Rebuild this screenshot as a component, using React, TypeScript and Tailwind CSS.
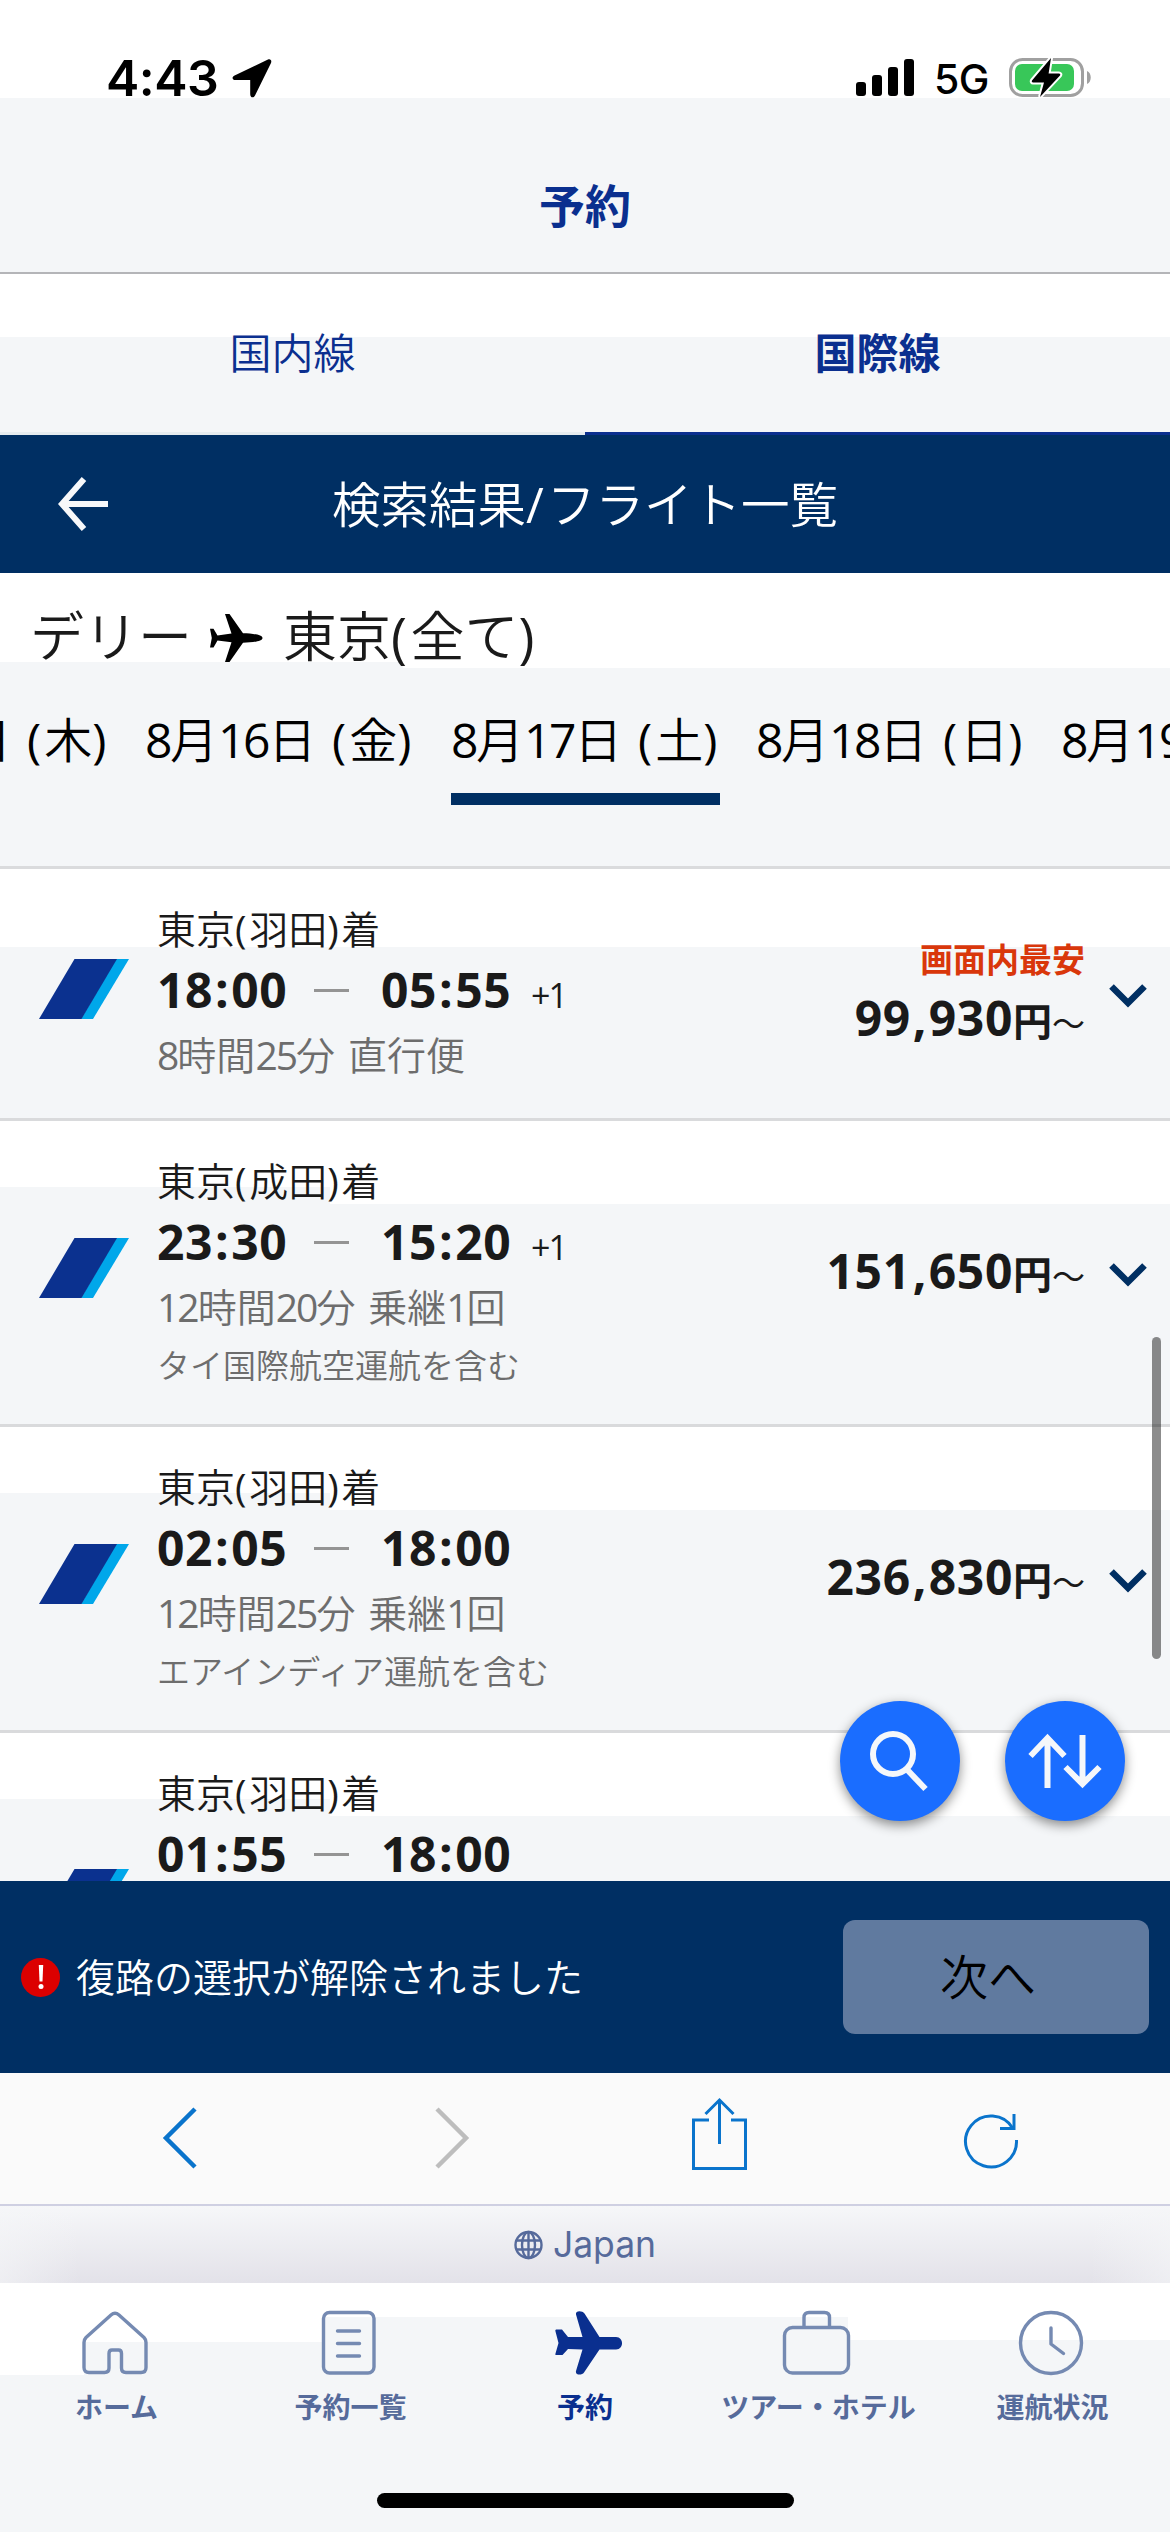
import type { ReactNode } from 'react'

interface Flight {
  arrival: string
  depart: string
  arrive: string
  nextDay?: boolean
  detail?: string
  operator?: string
  price?: string
  cheapest?: boolean
  rowClass: string
}

const flights: Flight[] = [
  {
    arrival: '東京(羽田)着',
    depart: '18:00',
    arrive: '05:55',
    nextDay: true,
    detail: '8時間25分 直行便',
    price: '99,930',
    cheapest: true,
    rowClass:
      'h-[252px] bg-[linear-gradient(#fff_78px,#f4f6f8_78px)]',
  },
  {
    arrival: '東京(成田)着',
    depart: '23:30',
    arrive: '15:20',
    nextDay: true,
    detail: '12時間20分 乗継1回',
    operator: 'タイ国際航空運航を含む',
    price: '151,650',
    rowClass:
      'h-[306px] bg-[linear-gradient(#fff_66px,#f4f6f8_66px),linear-gradient(#fff_83px,#f4f6f8_83px)] bg-[size:330px_100%,100%_100%] bg-no-repeat',
  },
  {
    arrival: '東京(羽田)着',
    depart: '02:05',
    arrive: '18:00',
    detail: '12時間25分 乗継1回',
    operator: 'エアインディア運航を含む',
    price: '236,830',
    rowClass:
      'h-[306px] bg-[linear-gradient(#fff_66px,#f4f6f8_66px),linear-gradient(#fff_83px,#f4f6f8_83px)] bg-[size:330px_100%,100%_100%] bg-no-repeat',
  },
  {
    arrival: '東京(羽田)着',
    depart: '01:55',
    arrive: '18:00',
    rowClass:
      'h-[344px] bg-[linear-gradient(#fff_66px,#f4f6f8_66px),linear-gradient(#fff_83px,#f4f6f8_83px)] bg-[size:330px_100%,100%_100%] bg-no-repeat',
  },
]

const dates = ['8月15日 (木)', '8月16日 (金)', '8月17日 (土)', '8月18日 (日)', '8月19日 (月)']

// Narrow digits and slightly wider punctuation than the base font
function Mixed({ text, bold }: { text: string; bold?: boolean }) {
  const parts = text.split(/([0-9]+|[ ():,/]+)/).filter(Boolean)
  return (
    <>
      {parts.map((part, i) => {
        if (/^[0-9]/.test(part)) {
          return (
            <span key={i} className={bold ? 'tracking-[0.013em]' : 'font-medium tracking-[-0.05em]'}>
              {part}
            </span>
          )
        }
        if (/^[ ():,/]/.test(part)) {
          return (
            <span key={i} className={bold ? 'pl-[0.04em] tracking-[0.05em]' : 'font-medium tracking-[0.068em]'}>
              {part}
            </span>
          )
        }
        return <span key={i}>{part}</span>
      })}
    </>
  )
}

function StatusBar() {
  return (
    <div className="flex h-[122px] items-start justify-between bg-[linear-gradient(#fff_98px,#f4f6f8_98px)] pl-[106px] pr-[78px] font-['Inter'] text-black">
      <div className="flex pt-[48px]">
        <span className="text-[50px] font-semibold leading-[60px] tracking-[-0.5px]">4:43</span>
        <svg className="ml-[14px] mt-[11px] h-[39px] w-[40px]" viewBox="0 0 40 39">
          <path d="M36 0.6 L2.6 16.4 C-0.6 18 0.2 21 3.4 21 H18.2 V35 C18.2 39 21.6 39.4 23 36.4 L39 4 C40 1.6 38.4 -0.4 36 0.6Z" />
        </svg>
      </div>
      <div className="flex items-start">
        <svg className="mt-[59px] h-[38px] w-[59px]" viewBox="0 0 59 38">
          <rect x="0" y="23" width="10" height="14" rx="3" />
          <rect x="16" y="16" width="10" height="21" rx="3" />
          <rect x="32" y="8" width="10" height="29" rx="3" />
          <rect x="48" y="0" width="10" height="37" rx="3" />
        </svg>
        <span className="ml-[19px] mt-[54px] text-[41px] font-medium leading-[50px] tracking-[-0.5px]">5G</span>
        <svg className="ml-[20px] mt-[56px] h-[43px] w-[83px]" viewBox="0 0 83 43">
          <rect x="1.5" y="3.5" width="72" height="36" rx="12" fill="#fff" stroke="#a0a0a0" strokeWidth="3" />
          <rect x="6" y="8" width="59" height="27" rx="7" fill="#38c759" />
          <path d="M78 15 C83 17 83 26 78 28Z" fill="#a0a0a0" />
          <path
            d="M42 2 L23 24.5 C22.4 25.6 23 26.4 24 26.4 H35 L31 41 L51 19.4 C51.8 18.4 51 17.4 50 17.4 H39.6Z"
            stroke="#fff"
            strokeWidth="4"
            paintOrder="stroke"
          />
        </svg>
      </div>
    </div>
  )
}

function TabHeader() {
  return (
    <div className="grid h-[161px] grid-cols-2 bg-[linear-gradient(#fff_63px,#f4f6f8_63px)] text-[42px] leading-[158px] text-[#0b2f8f]">
      <div className="border-b-[3px] border-[#e6ecef] text-center">国内線</div>
      <div className="border-b-[3px] border-[#0b2f8f] text-center font-bold">国際線</div>
    </div>
  )
}

function PlaneGlyph() {
  return (
    <svg className="h-[48px] w-[53px]" viewBox="0 0 53 48">
      <path d="M15 0 H19.5 L33 19.3 C42 19.5 52.500 20.500 52.500 24 C52.500 27.500 42 28.500 33 28.800 L19.500 48 H15 L21.500 28.300 L7.500 26.500 L3.500 33.500 H0 L1.800 24 L0 14.800 H3.500 L7.500 21.500 L21.500 19.500Z" />
    </svg>
  )
}

function AirlineLogo() {
  return (
    <svg className="h-[60px] w-[90px]" viewBox="0 0 90 60">
      <path d="M77 0H90L54 60H42Z" fill="#00a7ea" />
      <path d="M35.5 0H78L42.5 60H0Z" fill="#0b318f" />
    </svg>
  )
}

function FlightRow({ flight }: { flight: Flight }) {
  return (
    <div className={`flex shrink-0 border-b-[3px] border-[#d9dadc] ${flight.rowClass}`}>
      <div className="flex w-[157px] items-center pb-[9px] pl-[39px]">
        <AirlineLogo />
      </div>

      <div className="flex-1 pt-[36px] text-[39px] text-[#6d6d6d]">
        <p className="h-[48px] leading-[48px] text-[#1a1a1a]">
          <Mixed text={flight.arrival} />
        </p>
        <div className="flex h-[74px] items-center text-[48px] font-bold leading-[74px] text-[#1a1a1a]">
          <span className="w-[157px]">
            <Mixed text={flight.depart} bold />
          </span>
          <span className="h-[3px] w-[35px] bg-[#949494]" />
          <span className="ml-[32px] w-[150px]">
            <Mixed text={flight.arrive} bold />
          </span>
          {flight.nextDay && <span className="pt-[9px] text-[34px] font-medium tracking-[-0.06em]">+1</span>}
        </div>
        {flight.detail && (
          <p className="h-[56px] leading-[56px]">
            <Mixed text={flight.detail} />
          </p>
        )}
        {flight.operator && <p className="h-[62px] text-[33px] leading-[62px]">{flight.operator}</p>}
      </div>

      <div className="flex flex-col justify-center pr-[24px] text-right text-[#1a1a1a]">
        {flight.cheapest && (
          <p className="-mt-[4px] text-[33px] font-bold leading-[55px] text-[#d9370b]">画面内最安</p>
        )}
        {flight.price && (
          <p className="pt-[3px] text-[48px] font-bold leading-[56px]">
            <Mixed text={flight.price} bold />
            <span className="text-[39px] font-bold">円</span>
            <span className="text-[33px] font-normal">〜</span>
          </p>
        )}
      </div>

      <div className="flex w-[61px] items-center pt-[5px]">
        <svg className="h-[24px] w-[38px]" viewBox="0 0 38 24" fill="none" stroke="#002f63" strokeWidth="6.5">
          <path d="M2.5 2.5 L19 19 L35.5 2.5" />
        </svg>
      </div>
    </div>
  )
}

function Fab({ children }: { children: ReactNode }) {
  return (
    <div className="flex h-[120px] w-[120px] items-center justify-center rounded-full bg-[#1a6dff] shadow-[0_4px_12px_rgba(0,0,0,0.45)]">
      {children}
    </div>
  )
}

function BrowserBar() {
  return (
    <div className="flex h-[133px] items-start border-b-2 border-[#cfd0e2] bg-[#fafafa]">
      <svg className="ml-[162px] mt-[34px] h-[62px] w-[36px]" viewBox="0 0 36 62" fill="none" stroke="#0a74cc" strokeWidth="4.5">
        <path d="M33 2 L4 31 L33 60" />
      </svg>
      <svg className="ml-[236px] mt-[34px] h-[62px] w-[36px]" viewBox="0 0 36 62" fill="none" stroke="#bdbdbd" strokeWidth="4.5">
        <path d="M3 2 L32 31 L3 60" />
      </svg>
      <svg className="ml-[222px] mt-[24px] h-[74px] w-[55px]" viewBox="0 0 55 74" fill="none" stroke="#0a74cc" strokeWidth="3">
        <path d="M17 23 H1.5 V71.5 H53.5 V23 H39" />
        <path d="M27.5 47 V3 M13.5 17 L27.5 3 L41.5 17" />
      </svg>
      <svg className="ml-[216px] mt-[40px] h-[58px] w-[58px]" viewBox="0 0 58 58" fill="none" stroke="#0a74cc" strokeWidth="3">
        <path d="M53.5 27 A25.5 25.5 0 1 1 50 15.5" />
        <path d="M51 1 V15.5 H37" />
      </svg>
    </div>
  )
}

const tabs: { label: string; icon: ReactNode; active?: boolean }[] = [
  {
    label: 'ホーム',
    icon: (
      <path d="M27 4.600 Q31 1 35 4.600 L60 27 Q62 29 62 32 V57 Q62 62 57 62 H42 Q37.500 62 37.500 57.500 V43 Q37.500 39.500 34.500 39.500 H28 Q25 39.500 25 43 V57.500 Q25 62 20.500 62 H5 Q0 62 0 57 V32 Q0 29 2 27Z" />
    ),
  },
  {
    label: '予約一覧',
    icon: (
      <>
        <rect x="5.500" y="2" width="50.500" height="60.500" rx="6" />
        <path d="M19.500 20.500H41.500M19.500 33H41.500M19.500 45.500H41.500" strokeLinecap="round" />
      </>
    ),
  },
  {
    label: '予約',
    active: true,
    icon: (
      <path
        transform="translate(3 0)"
        stroke="none"
        fill="#0a2f8f"
        d="M21 4 C20 0 27 -0.500 29.500 3 L44.500 26.500 H61 C69 26.500 69 39 61 39 H44.500 L29 62 C27 65 20 65 21 60.500 L27.500 39 L13 38.500 L7.500 44.500 H1.500 C0.500 44.500 0 44 0.500 43 L3.500 32.500 L0.500 21 C0 19.500 0.500 19 2 19 H7 L13 26.500 H27.500Z"
      />
    ),
  },
  {
    label: 'ツアー・ホテル',
    icon: (
      <>
        <rect x="-1.500" y="17" width="64" height="45.500" rx="8" />
        <path d="M18 16 V7 Q18 2 23 2 H38.500 Q43.500 2 43.500 7 V16" />
      </>
    ),
  },
  {
    label: '運航状況',
    icon: (
      <>
        <circle cx="31" cy="32.500" r="30.500" />
        <path d="M31 17.500V33.500L43.500 43" strokeLinecap="round" strokeLinejoin="round" />
      </>
    ),
  },
]

function BottomTabs() {
  return (
    <nav className="h-[249px] bg-[#f4f6f8] bg-[linear-gradient(#fff_92px,#f4f6f8_92px),linear-gradient(#fff_59px,#f4f6f8_59px),linear-gradient(#fff_34px,#f4f6f8_34px),linear-gradient(#fff_57px,#f4f6f8_57px)] bg-[size:84px_100%,323px_100%,848px_100%,100%_100%] bg-no-repeat">
      <div className="grid h-[210px] grid-cols-5">
        {tabs.map((tab) => (
          <div key={tab.label} className="flex flex-col items-center pt-[27px]">
            <svg className="h-[66px] w-[68px] overflow-visible" viewBox="-1 -0.5 68 66" fill="none" stroke="#758ab2" strokeWidth="3.4">
              {tab.icon}
            </svg>
            <span
              className={
                tab.active
                  ? 'mt-[9px] whitespace-nowrap text-[28px] font-bold leading-[44px] text-[#0a2f8f]'
                  : 'mt-[9px] whitespace-nowrap pr-[1px] text-[28px] font-bold leading-[44px] text-[#566b9b]'
              }
            >
              {tab.label}
            </span>
          </div>
        ))}
      </div>
      <div className="mx-auto h-[15px] w-[417px] rounded-full bg-black" />
    </nav>
  )
}

export default function App() {
  return (
    <div className="flex h-[2532px] w-[1170px] flex-col overflow-hidden bg-[#f4f6f8] font-['Open_Sans','Noto_Sans_CJK_JP',sans-serif] font-[350]">
      <StatusBar />

      <h1 className="h-[152px] border-b-2 border-[#b4b5b8] text-center text-[46px] font-bold leading-[166px] text-[#0a2f8f]">
        予約
      </h1>

      <TabHeader />

      <div className="flex h-[138px] items-center bg-[#002f63] text-white">
        <svg className="ml-[57px] h-[54px] w-[52px]" viewBox="0 0 52 54" fill="none" stroke="#f7f8fa" strokeWidth="6">
          <path d="M27 2 L5 27 L27 52 M5 27 H51" />
        </svg>
        <p className="flex-1 pr-[109px] text-center text-[48.500px] leading-[136px]">
          <Mixed text="検索結果/フライト一覧" />
        </p>
      </div>

      <div className="h-[296px] border-b-[3px] border-[#dadbdd] bg-[linear-gradient(#fff_89px,#f4f6f8_89px),linear-gradient(#fff_95px,#f4f6f8_95px)] bg-[size:403px_100%,100%_100%] bg-no-repeat">
        <div className="flex h-[126px] items-center pl-[30px] text-[54px] leading-[126px] text-[#1a1a1a]">
          <span>デリー</span>
          <span className="ml-[18px] mr-[20px] pt-[4px]">
            <PlaneGlyph />
          </span>
          <span>
            <Mixed text="東京(全て)" />
          </span>
        </div>
        <div className="-ml-[160px] flex gap-[36px] text-[48px] text-black">
          {dates.map((date, i) => (
            <div
              key={date}
              className={
                i === 2
                  ? 'ml-px h-[106px] w-[269px] shrink-0 whitespace-nowrap border-b-[12px] border-[#002f63] leading-[82px]'
                  : 'h-[106px] w-[269px] shrink-0 whitespace-nowrap leading-[82px]'
              }
            >
              <Mixed text={date} />
            </div>
          ))}
        </div>
      </div>

      <div className="relative flex h-[1012px] shrink-0 flex-col overflow-hidden">
        {flights.map((flight, i) => (
          <FlightRow key={i} flight={flight} />
        ))}

        {/* Scroll indicator */}
        <div className="absolute right-[9px] top-[468px] h-[322px] w-[9px] rounded-full bg-black/45" />

        {/* Floating buttons */}
        <div className="absolute right-[45px] top-[832px] flex gap-[45px]">
          <Fab>
            <svg className="h-[64px] w-[60px]" viewBox="0 0 60 64" fill="none" stroke="#f5f7fa" strokeWidth="6">
              <circle cx="23" cy="25" r="20" />
              <path d="M36.500 40 L55.500 60" />
            </svg>
          </Fab>
          <Fab>
            <svg className="h-[56px] w-[74px]" viewBox="0 0 74 56" fill="none" stroke="#f5f7fa" strokeWidth="6">
              <path d="M19.500 55 V6 M2.500 23 L19.500 5 L36.500 23" />
              <path d="M54.500 2 V50 M37.500 34 L54.500 51 L71.500 34" />
            </svg>
          </Fab>
        </div>
      </div>

      <div className="flex h-[192px] shrink-0 items-center bg-[#002f63] pl-[21px] pr-[21px]">
        <span className="flex h-[39px] w-[39px] items-center justify-center rounded-full bg-[#dc0000]">
          <svg className="h-[25px] w-[6px]" viewBox="0 0 6 25" fill="#fff">
            <path d="M0.800 0 H5.200 L4.500 16.500 H1.500Z" />
            <circle cx="3" cy="21.500" r="2.500" />
          </svg>
        </span>
        <p className="ml-[16px] flex-1 text-[39px] text-white">復路の選択が解除されました</p>
        <button className="h-[114px] w-[306px] rounded-[12px] bg-[#607a9f] pr-[16px] text-[48px] text-black">次へ</button>
      </div>

      <BrowserBar />

      <div className="h-[77px] shrink-0 bg-[linear-gradient(90deg,rgba(245,246,248,0.6)_0,rgba(245,246,248,0)_80px,rgba(245,246,248,0)_1090px,rgba(245,246,248,0.6)_100%),linear-gradient(#f6f7f9,#e3e2e9)]">
        <div className="flex h-[77px] items-center justify-center gap-[10px] font-['Inter'] text-[35.500px] font-normal text-[#566a9b]">
          <svg className="h-[30px] w-[29px]" viewBox="0 0 29 30" fill="none" stroke="#566a9b" strokeWidth="2.4">
            <circle cx="14.500" cy="15" r="13" />
            <ellipse cx="14.500" cy="15" rx="6.500" ry="13" />
            <path d="M14.500 2V28M2.500 10.500H26.500M2.500 19.500H26.500" />
          </svg>
          Japan
        </div>
      </div>

      <BottomTabs />
    </div>
  )
}
